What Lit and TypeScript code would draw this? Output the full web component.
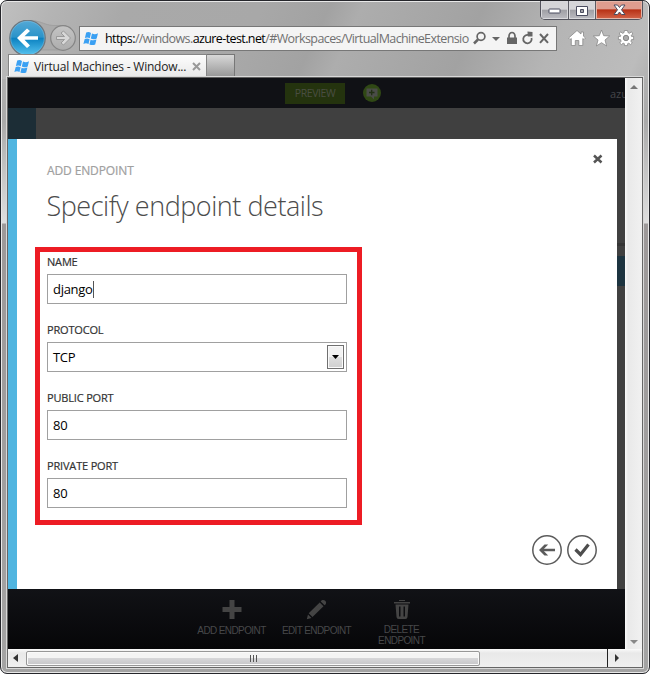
import { LitElement, html, css, svg } from "lit";
import { customElement } from "lit/decorators.js";

const flag = svg`<path d="M3.2 1.6C5 .6 6.4 1 8 2L6.8 7.2C5 6.2 3.6 6.2 1.9 7ZM9 2.5C11 3.4 12.800 3.400 15 2.200L13.700 7.400C11.500 8.600 9.600 8.400 7.800 7.600ZM1.700 8C3.400 7.100 5 7.200 6.600 8.200L5.500 13C3.800 12 2.300 12 .4 12.900ZM7.600 8.700C9.600 9.600 11.400 9.500 13.400 8.500L12.200 13.400C10.200 14.500 8.300 14.200 6.400 13.400Z" fill="#3aa0f3"/>`;

@customElement("form-field")
class FormField extends LitElement {
  static properties = { label: {}, value: {}, kind: {} };
  declare label: string;
  declare value: string;
  declare kind: string;
  static styles = css`
    :host { display: block; height: 68px; }
    .label { height: 22px; line-height: 20px; font-size: 11px; color: #333; letter-spacing: -0.17px; -webkit-text-stroke: 0.2px #333; }
    .box { box-sizing: border-box; height: 30px; border: 1px solid #a0a0a0; background: #fff; display: flex; align-items: center; padding: 0 2px 0 5px; font-size: 13px; color: #000; }
    .value { flex: 1; display: flex; align-items: center; line-height: 28px; letter-spacing: -0.3px; }
    .caret { width: 1px; height: 17px; background: #555; }
    .drop { box-sizing: border-box; width: 17px; height: 24px; border: 1px solid #707070; box-shadow: inset 0 0 0 1px #fafafa; background: linear-gradient(#f2f2f2 48%, #dedede 52%, #cfcfcf); display: flex; align-items: center; justify-content: center; }
  `;
  render() {
    return html`<div class="label">${this.label}</div>
      <div class="box">
        <span class="value">${this.value}${this.kind === "focus" ? html`<i class="caret"></i>` : ""}</span>
        ${this.kind === "select"
          ? html`<span class="drop"><svg width="7" height="4"><path d="M0 0H7L3.500 4Z"/></svg></span>`
          : ""}
      </div>`;
  }
}

@customElement("app-root")
class AppRoot extends LitElement {
  static styles = css`
    :host { display: block; width: 650px; height: 674px; background: #fff; font-family: "Open Sans", "Noto Sans", sans-serif; overflow: hidden; }
    * { box-sizing: border-box; }
    svg { display: block; flex: none; }
    .window { width: 650px; height: 674px; border: 1px solid #25262b; border-radius: 7px; box-shadow: inset 0 0 0 1px #e8e8e8; padding: 0 6px 5px;
      background: linear-gradient(115deg, #c0c0c0 0, #b4b4b4 50px, #a9a9a9 115px, #a8a8a8 240px, #a2a2a2 300px, #adadad 330px, #a2a2a2 440px, #b5b5b5 520px, #bcbcbc 600px, #b0b0b0 100%) 0 0 / 650px 78px no-repeat,
        linear-gradient(#bcbcbc 0, #aaa 120px, #dedede 222px, #9d9999 223px, #a3a3a3 100%); display: flex; flex-direction: column; }
    .window > * { flex: none; }
    .caption { display: flex; justify-content: flex-end; height: 19px; }
    .buttons { display: flex; width: 103px; height: 19px; border: 1px solid #53535d; border-top: 0; border-radius: 0 0 5px 5px; overflow: hidden; }
    .cap { display: flex; align-items: center; justify-content: center; width: 28px; border-right: 1px solid #5b5b63; background: linear-gradient(#d5d5d8 0 45%, #a0a0a6 52%, #bcbcc2); box-shadow: inset 0 0 0 1px #d8d8dc; }
    .cap.max { width: 27px; }
    .cap.close { width: 46px; border: 0; background: linear-gradient(#df9d8f 0 42%, #b83217 50%, #d3654a); box-shadow: inset 0 0 0 1px #e5b5a8; }
    .nav { display: flex; height: 34px; }
    .address { flex: none; display: flex; width: 478px; height: 25px; margin: 6px 0 0 1px; border: 1px solid #777; background: #f4f4f4; align-items: center; padding-left: 3px; }
    .url { flex: 1; min-width: 0; margin-left: 6px; font-size: 12.5px; color: #707070; white-space: nowrap; letter-spacing: -0.6px; }
    .url b { font-weight: 400; color: #000; }
    .tabs { display: flex; height: 23px; padding-left: 1px; }
    .tab { display: flex; align-items: center; width: 199px; border: 1px solid #858585; border-bottom: 0; background: linear-gradient(#fdfdfd, #e8e8e8); padding-left: 5px; box-shadow: inset 1px 1px #fff; }
    .name { flex: 1; margin-left: 4px; font-size: 12px; color: #222; letter-spacing: -0.2px; white-space: nowrap; }
    .tab svg + .name + svg { margin-right: 5px; }
    .newtab { width: 28px; border: 1px solid #777; border-left: 0; border-bottom: 0; background: linear-gradient(#d8d8d8, #969696); }
    .client { width: 636px; height: 591px; border: 1px solid #666; border-top: 1px solid #5e5e5e; box-shadow: 0 0 0 1px #d8d8d8; display: grid; grid-template-columns: 617px 17px; grid-template-rows: 571px 18px; background: #f0f0f0; }
    .page { display: flex; flex-direction: column; background: #404040; overflow: hidden; }
    .top { display: flex; align-items: center; height: 30px; background: #101115; padding-left: 277px; flex: none; }
    .preview { width: 60px; height: 21px; line-height: 21px; text-align: center; background: #24330e; color: #4a4e42; font-size: 10.5px; letter-spacing: -0.4px; }
    .top svg { margin-left: 17px; }
    .user { margin-left: 228px; color: #45464a; font-size: 11px; white-space: nowrap; width: 15px; padding-top: 1px; }
    .band { height: 31px; display: flex; flex: none; }
    .tile { width: 28px; background: #1c2d36; }
    .middle { display: flex; height: 450px; flex: none; }
    .dialog { width: 609px; border-left: 9px solid #50b5e0; background: #fff; padding: 0 13px 0 18px; display: flex; flex-direction: column; }
    .head { display: flex; justify-content: space-between; height: 108px; }
    .kicker { margin: 23px 0 0 12px; font-size: 12px; line-height: 18px; color: #a0a0a0; letter-spacing: -0.12px; -webkit-text-stroke: 0.2px #a0a0a0; }
    h1 { margin: 7px 0 0 11.500px; font-weight: 300; font-size: 27px; line-height: 38px; color: #4c4c4c; letter-spacing: -0.47px; white-space: nowrap; }
    .head svg { margin-top: 15px; }
    .form { width: 327px; height: 278px; border: 5px solid #ed1c24; padding: 0 10px 0 7px; }
    .actions { display: flex; justify-content: flex-end; gap: 5px; margin: 10px 7px 0 0; }
    .side { width: 8px; padding-top: 104px; }
    .rule { height: 3px; background: #353535; margin-bottom: 10px; }
    .chip { height: 30px; background: #1d3440; }
    .commands { display: flex; height: 60px; flex: none; background: linear-gradient(#111216, #060608); padding: 10px 0 0 181px; }
    .cmd { width: 85px; display: flex; flex-direction: column; align-items: center; color: #47484a; font: 10px/11px "Liberation Sans", sans-serif; text-align: center; letter-spacing: -0.6px; }
    .cmd span { margin-top: 5px; }
    .cmd.del span { margin-top: 4px; width: 60px; }
    .vbar { display: flex; flex-direction: column; justify-content: space-between; background: linear-gradient(90deg, #fafafa, #e9e9e9 3px, #f1f1f1); padding: 7px 0 5px 5px; }
    .hbar { grid-column: 1 / 3; display: flex; align-items: center; background: linear-gradient(#fafafa, #e9e9e9 4px, #f0f0f0); padding-left: 5px; }
    .thumb { width: 454px; height: 15px; margin-left: 8px; border: 1px solid #979797; border-radius: 2px; box-shadow: inset 0 0 0 1px #fafafa; background: linear-gradient(#f4f4f4 0 44%, #d6d6d8 50%, #c6c6c9); display: flex; align-items: center; justify-content: center; }
    .right { margin-left: 127px; width: 11px; height: 18px; border-left: 1px solid #222; display: flex; align-items: center; padding-left: 7px; }
  `;

  render() {
    return html`<div class="window">
      <div class="caption"><div class="buttons">
        <div class="cap"><svg width="13" height="10"><rect x="1" y="4" width="11" height="4" rx=".5" fill="#fff" stroke="#4b4d60"/></svg></div>
        <div class="cap max"><svg width="12" height="11"><path fill-rule="evenodd" d="M.5 1.500H11.500V10.500H.5ZM4.500 4.500V7.500H7.500V4.500Z" fill="#fff" stroke="#4b4d60"/></svg></div>
        <div class="cap close"><svg width="13" height="12"><path d="M1 1H4.500L6.500 3.500 8.500 1H12L8.500 5.800 12 10.500H8.500L6.500 8 4.500 10.500H1L4.500 5.800Z" fill="#fff" stroke="#4b4d60"/></svg></div>
      </div></div>
      <div class="nav">
        <svg width="71" height="34" viewBox="7 20 71 34">
          <defs><linearGradient id="b" x2="0" y2="1"><stop stop-color="#55a9d6"/><stop offset=".48" stop-color="#2b93c9"/><stop offset=".5" stop-color="#0a80c0"/><stop offset="1" stop-color="#58c4f0"/></linearGradient>
          <linearGradient id="f" x2="0" y2="1"><stop stop-color="#c4c4c4"/><stop offset="1" stop-color="#adadad"/></linearGradient></defs>
          <path d="M32 20.500C44 22 43 24.500 53 25.500H66V50H40Z" fill="#aaa" stroke="#9a9a9a" stroke-width=".7"/>
          <circle cx="27.500" cy="38" r="17.700" fill="url(#b)" stroke="#6d7880" stroke-width="1.300"/>
          <circle cx="27.500" cy="38" r="16.700" fill="none" stroke="#8fc9e6" stroke-opacity=".4"/>
          <path d="M38 36.200V39.800H24.500L30 45.500 27 48 17 38 27 28.500 30 31 24.500 36.200Z" fill="#fff"/>
          <circle cx="63" cy="38" r="12.300" fill="url(#f)" stroke="#858585" stroke-width="1.200"/>
          <path d="M56.500 36.500H64.500L61 33 63.500 31 70.500 38 63.500 45 61 43 64.500 39.500H56.500Z" fill="#d8d8d8" stroke="#949494" stroke-width=".9"/>
        </svg>
        <div class="address">
          <svg width="16" height="15">${flag}</svg>
          <span class="url"><b>https:</b>//windows.<b>azure-test.net</b>/#Workspaces/VirtualMachineExtensio</span>
          <svg width="84" height="23" viewBox="472 27 84 23" fill="none" stroke="#666">
            <circle cx="481" cy="36.500" r="3.900" stroke-width="1.700"/><path d="M478 39.500L474 43.500" stroke-width="2.500"/>
            <path d="M492 37H500L496 41Z" fill="#666" stroke="none"/>
            <path d="M507 37.500H517V44H507Z" fill="#666" stroke="none"/><path d="M509 38V36A3 3.500 0 0 1 515 36V38" stroke-width="1.700"/>
            <path d="M529 35.200A4.200 4.200 0 1 0 531.500 38" stroke-width="1.800"/><path d="M527.500 31.500L532.500 32V36.500H527.800Z" fill="#666" stroke="none"/>
            <path d="M540 34L548 42.800M548 34L540 42.800" stroke-width="2"/>
          </svg>
        </div>
        <svg width="80" height="34" viewBox="557 20 80 34" fill="#fff" stroke="#888" stroke-width=".8">
          <path d="M577 30.500L581 34V32H583.500V36.200L585.500 38 584 39.500 582.800 38.500V45.500H578.800V40.500H575.300V45.500H571.300V38.500L570 39.500 568.600 38Z"/>
          <path d="M601.500 30L603.700 35.700 609.700 36 605 40 606.600 46 601.500 42.700 596.400 46 598 40 593.300 36 599.300 35.700Z"/>
          <g transform="translate(626 38)"><path d="M-1.600-7.500H1.600L2-5.300 3.700-4.700 5.300-6.300 6.900-4 5.200-2.700 5.500-1.600H7.600V1.600H5.500L4.900 3.200 6.300 5 4.500 6.600 2.900 5.200 1.600 5.700V7.600H-1.600V5.700L-2.900 5.200-4.500 6.600-6.300 5-4.900 3.200-5.500 1.600H-7.600V-1.600H-5.500L-5.200-2.700-6.900-4-5.300-6.300-3.700-4.700-2-5.300Z"/><circle r="2.700" fill="#aaa" stroke-width="1"/></g>
        </svg>
      </div>
      <div class="tabs">
        <div class="tab"><svg width="16" height="15">${flag}</svg><span class="name">Virtual Machines - Window...</span><svg width="9" height="9"><path d="M1 1L8 8M8 1L1 8" stroke="#999" stroke-width="2"/></svg></div>
        <div class="newtab"></div>
      </div>
      <div class="client">
        <div class="page">
          <div class="top"><div class="preview">PREVIEW</div>
            <svg width="20" height="20"><circle cx="10" cy="10" r="9" fill="#304815"/><path d="M4.500 5.500H15.500V13.500H12V16.500L9 13.500H4.500Z" fill="#4a4c48"/><path d="M7 9.500H12.500M9.700 6.800V12.200" stroke="#223014" stroke-width="1.300"/></svg>
            <div class="user">azu</div></div>
          <div class="band"><div class="tile"></div></div>
          <div class="middle">
            <div class="dialog">
              <div class="head"><div><div class="kicker">ADD ENDPOINT</div><h1>Specify endpoint details</h1></div>
                <svg width="12" height="12"><path d="M2 1.500L9.500 8.500M9.500 1.500L2 8.500" stroke="#555" stroke-width="2.500"/></svg></div>
              <div class="form">
                <form-field label="NAME" value="django" kind="focus"></form-field>
                <form-field label="PROTOCOL" value="TCP" kind="select"></form-field>
                <form-field label="PUBLIC PORT" value="80"></form-field>
                <form-field label="PRIVATE PORT" value="80"></form-field>
              </div>
              <div class="actions">
                <svg width="30" height="30" fill="none" stroke="#5b5b5b"><circle cx="15" cy="15" r="14.200" stroke-width="1.500"/><path d="M9 15H23" stroke-width="2.500"/><path d="M12.500 9.500H16.200L10.800 15 16.200 20.500H12.500L7 15Z" fill="#5b5b5b" stroke="none"/></svg>
                <svg width="30" height="30" fill="none" stroke="#5b5b5b"><circle cx="15" cy="15" r="14.200" stroke-width="1.500"/><path d="M8.500 14.500L13.500 19.500 21.500 9.500" stroke="#4d4d4d" stroke-width="3.200"/></svg>
              </div>
            </div>
            <div class="side"><div class="rule"></div><div class="chip"></div></div>
          </div>
          <div class="commands">
            <div class="cmd"><svg width="20" height="21"><path d="M7.500 1H12.500V8H19.500V13H12.500V20H7.500V13H.500V8H7.500Z" fill="#444"/></svg><span>ADD ENDPOINT</span></div>
            <div class="cmd"><svg width="21" height="21"><path d="M13.700 3.500L17.500 7.300 6.500 18 2.700 14.200ZM14.700 2.500C16 .5 18 .6 19.200 1.800 20.500 3.100 20.500 5 18.600 6.300ZM2 15.500L5.500 19 .8 20.300Z" fill="#444"/></svg><span>EDIT ENDPOINT</span></div>
            <div class="cmd del"><svg width="16" height="21" viewBox="1 0 16 21"><path d="M6 1H12V2H6ZM1 3H17V4.500H1ZM2.500 5.500H15.500L14.500 18Q14.300 20 12.500 20H5.500Q3.700 20 3.500 18ZM6 7.500V17.500H7.500V7.500ZM10.500 7.500V17.500H12V7.500Z" fill-rule="evenodd" fill="#444"/></svg><span>DELETE ENDPOINT</span></div>
          </div>
        </div>
        <div class="vbar"><svg width="8" height="4"><path d="M0 4L4 0 8 4Z" fill="#777"/></svg><svg width="8" height="4"><path d="M0 0H8L4 4Z" fill="#888"/></svg></div>
        <div class="hbar"><svg width="5" height="8"><path d="M5 0V8L0 4Z" fill="#333"/></svg>
          <div class="thumb"><svg width="9" height="7"><path d="M1.500 0V7M4.500 0V7M7.500 0V7" stroke="#555"/></svg></div>
          <div class="right"><svg width="4" height="8"><path d="M0 0V8L4 4Z" fill="#333"/></svg></div></div>
      </div>
    </div>`;
  }
}
